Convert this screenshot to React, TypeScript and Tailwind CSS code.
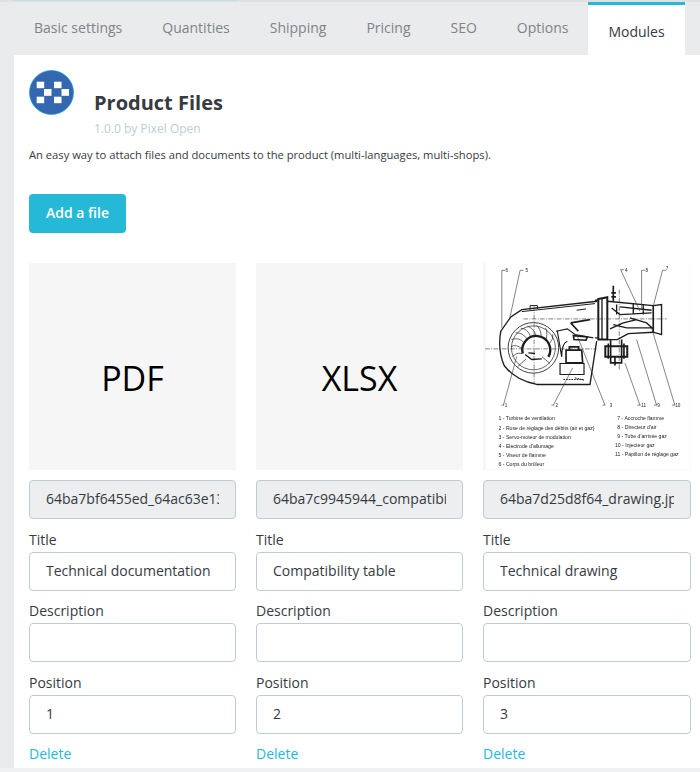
import React from "react";

const tabs = ["Basic settings", "Quantities", "Shipping", "Pricing", "SEO", "Options"];

const files = [
  { file: "64ba7bf6455ed_64ac63e13f1a2.pdf", title: "Technical documentation", position: "1", preview: "PDF" },
  { file: "64ba7c9945944_compatibility.xlsx", title: "Compatibility table", position: "2", preview: "XLSX" },
  { file: "64ba7d25d8f64_drawing.jpg", title: "Technical drawing", position: "3", preview: "" },
];

const Logo = () => (
  <svg width="45" height="45" viewBox="0 0 45 45" className="block">
    <circle cx="22.5" cy="22.5" r="22" fill="#3566b0" stroke="#1f9fd8" strokeWidth="0.8" />
    <g fill="#ffffff">
      <rect x="7.7" y="11.7" width="7.5" height="6.5" />
      <rect x="25" y="11.7" width="7.5" height="6.5" />
      <rect x="15" y="19" width="7.5" height="6.8" />
      <rect x="32.5" y="19" width="7.5" height="6.8" />
      <rect x="7.7" y="26.7" width="7.5" height="6.5" />
      <rect x="25" y="26.7" width="7.5" height="6.5" />
    </g>
  </svg>
);

const legendLeft = [
  "1  - Turbine de ventilation",
  "2  - Rose de réglage des débits (air et gaz)",
  "3  - Servo-moteur de modulation",
  "4  - Electrode d'allumage",
  "5  - Viseur de flamme",
  "6  - Corps du brûleur",
];

const legendRight = [
  "7  - Accroche flamme",
  "8  - Directeur d'air",
  "9  - Tube d'arrivée gaz",
  "10 - Injecteur gaz",
  "11 - Papillon de réglage gaz",
];

// burner cross-section, coordinates are in 3x zoom space of the picture
const Drawing = () => (
  <svg viewBox="10 10 622 622" className="block w-full h-full bg-[#f7f7f7] blur-[0.35px]">
    <rect x="18" y="10" width="614" height="620" fill="#ffffff" />
    <g fill="none" stroke="#1c1c1c" strokeWidth="4">
      <path d="M352 125 L125 150 L92 172 L62 215 Q52 270 72 318 Q105 362 170 375 L330 375 L350 245" />
      <path d="M125 156 L345 132 M150 150 L150 138 L172 138 L172 148 M290 152 L318 148" strokeWidth="3" />
      <circle cx="160" cy="265" r="76" strokeWidth="2.5" />
      <circle cx="160" cy="265" r="66" strokeWidth="2" />
      <path d="M128 282 A42 42 0 1 1 205 292" strokeWidth="7" />
      <path d="M94 240 Q118 232 132 250 M106 220 Q128 218 142 240 M122 206 Q142 206 152 232 M142 200 Q160 205 168 228 M170 198 Q182 208 184 232 M196 205 Q204 218 198 240 M218 224 Q222 238 208 252 M92 262 Q108 252 126 268 M98 292 Q106 278 126 282 M112 322 L138 298 M210 312 L186 292" strokeWidth="2" />
      <path d="M135 285 L155 300 L185 298 M145 280 L165 282" strokeWidth="4" />
      <path d="M228 215 L262 208 L285 225 L340 235 M232 215 Q238 250 245 292 M262 245 Q245 250 245 292" strokeWidth="3.5" />
      <path d="M272 190 L330 180 M272 190 L295 215 M280 228 L322 232 L318 242 L282 240Z" strokeWidth="5" />
      <path d="M258 272 L305 272 L308 310 L258 310Z M268 262 L296 262 L296 272 L268 272Z" strokeWidth="5" />
      <path d="M240 312 L312 312 L312 345 L240 345Z" strokeWidth="3.5" />
      <path d="M285 355 L312 362 M250 360 L310 360" strokeWidth="3" strokeDasharray="5 3" />
      <path d="M355 118 L382 113 L382 240 L355 240Z" strokeWidth="6" />
      <path d="M345 122 L355 122 M345 235 L355 235 M366 118 L366 240" strokeWidth="4" />
      <path d="M382 125 L520 138 L545 135 L545 225 L520 218 L445 222 L412 240 L382 240" strokeWidth="4" />
      <path d="M520 138 L520 218 M400 78 L400 125 M394 100 L408 100 M394 112 L408 112" strokeWidth="5" />
      <path d="M395 145 L420 165 L515 160 M420 142 L515 152 M400 195 L440 205 L520 205 M450 175 L500 190 L520 208 M390 208 L430 190 L470 180 M410 165 L410 135 M460 130 L460 165 M490 135 L490 165" strokeWidth="4" />
      <path d="M392 240 L392 310 L425 310 L425 240" strokeWidth="5" />
      <path d="M376 260 L442 260 L442 292 L376 292Z" strokeWidth="6" />
      <path d="M385 252 L385 298 M432 252 L432 298 M405 292 L405 318" strokeWidth="5" />
    </g>
    <g fill="none" stroke="#333333" strokeWidth="1.8">
      <path d="M15 268 L350 268 M130 178 L560 178 M162 140 L162 372 M418 90 L418 330" strokeDasharray="14 4 3 4" />
      <path d="M75 32 L65 32 L65 205 M130 32 L120 32 L88 180 M432 30 L422 30 L480 155 M495 32 L485 32 L485 150 M558 32 L548 32 L520 140" />
      <path d="M70 437 L110 290 M220 437 L278 325 M375 437 L290 225 M480 437 L435 310 M530 437 L470 240 M585 437 L515 205" />
      <path d="M64 437 L72 437 M214 437 L222 437 M368 437 L376 437 M472 437 L482 437 M522 437 L532 437 M576 437 L586 437" />
    </g>
    <g fontFamily="'Liberation Sans', Arial, sans-serif" fill="#222222" fontSize="14">
      <text x="76" y="37">6</text>
      <text x="136" y="36">5</text>
      <text x="435" y="36">4</text>
      <text x="497" y="36">8</text>
      <text x="558" y="32">7</text>
      <text x="74" y="442">1</text>
      <text x="226" y="442">2</text>
      <text x="389" y="442">3</text>
      <text x="484" y="442">11</text>
      <text x="532" y="442">9</text>
      <text x="586" y="442">10</text>
      {legendLeft.map((t, i) => (
        <text key={t} x="55" y={483 + i * 27.6} fontSize="15.5">{t}</text>
      ))}
      {legendRight.map((t, i) => (
        <text key={t} x={i > 2 ? 405 : 412} y={481 + i * 27.5} fontSize="15.5">{t}</text>
      ))}
    </g>
  </svg>
);

const inputCls =
  "block w-full h-[39px] rounded border border-[#bbcdd2] pl-4 pr-4 pb-[2px] text-sm text-[#363a41] font-['Open_Sans'] outline-none bg-white";

const FileCard = ({ file, title, position, preview }: (typeof files)[number]) => (
  <div className="flex flex-col">
    {preview ? (
      <div className="h-[207px] bg-[#f6f6f6] flex items-center justify-center pt-[22px] text-[34px] leading-none text-black">
        {preview}
      </div>
    ) : (
      <div className="h-[207px]">
        <Drawing />
      </div>
    )}
    <input
      readOnly
      value={file}
      className="block w-full h-[39px] rounded border border-[#bbcdd2] pl-4 pr-4 pb-[2px] text-sm text-[#363a41] font-['Open_Sans'] outline-none bg-[#eceef0] mt-[10px]"
    />
    <label className="mt-[11px] mb-[3px] text-sm leading-[19px] text-[#363a41]">Title</label>
    <input readOnly value={title} className={inputCls} />
    <label className="mt-[10px] mb-[3px] text-sm leading-[19px] text-[#363a41]">Description</label>
    <input readOnly value="" className={inputCls} />
    <label className="mt-[11px] mb-[3px] text-sm leading-[19px] text-[#363a41]">Position</label>
    <input readOnly value={position} className={inputCls} />
    <a className="mt-[10px] text-sm leading-[19px] text-[#25b9d7]">Delete</a>
  </div>
);

const App = () => {
  return (
    <div className="w-[700px] h-[772px] overflow-hidden bg-[#eaebec] font-['Open_Sans',sans-serif] relative">
      <div className="h-[2px] bg-[#dfe1e3] relative">
        <div className="absolute left-[12px] top-0 w-[226px] h-px bg-[#c5dfe4]" />
      </div>
      <div className="flex h-[53px] items-stretch bg-[#e9ebed]">
        <div className="flex pl-[34px]">
          {tabs.map((t) => (
            <span key={t} className="mr-10 pt-[16px] text-sm leading-[19px] text-[#7f8488]">
              {t}
            </span>
          ))}
        </div>
        <div className="absolute left-[588px] top-[2px] w-[97px] h-[53px] bg-white border-t-[3px] border-[#25b9d7] text-center text-sm leading-[19px] pt-[17px] text-[#363a41]">
          Modules
        </div>
      </div>
      <div className="ml-[14px] h-[713px] bg-white pl-[15px] pr-[9px] pt-[15px]">
        <div className="flex items-start">
          <Logo />
          <div className="ml-[20px] mt-[19px]">
            <h1 className="text-xl leading-[27px] font-bold text-[#363a41]">Product Files</h1>
            <p className="text-xs leading-4 mt-[5px] text-[#bbcdd2]">1.0.0 by Pixel Open</p>
          </div>
        </div>
        <p className="text-[11.2px] leading-4 mt-[10px] text-[#363a41]">
          An easy way to attach files and documents to the product (multi-languages, multi-shops).
        </p>
        <button className="mt-[31px] block w-[97px] h-[39px] rounded bg-[#25b9d7] pb-[2px] text-sm font-semibold text-white">
          Add a file
        </button>
        <div className="grid grid-cols-[207px_207px_208px] gap-x-5 mt-[30px]">
          {files.map((f) => (
            <FileCard key={f.file} {...f} />
          ))}
        </div>
      </div>
      <div className="absolute left-0 bottom-0 w-full h-1 bg-[#f0f1f2]" />
    </div>
  );
};

export default App;
